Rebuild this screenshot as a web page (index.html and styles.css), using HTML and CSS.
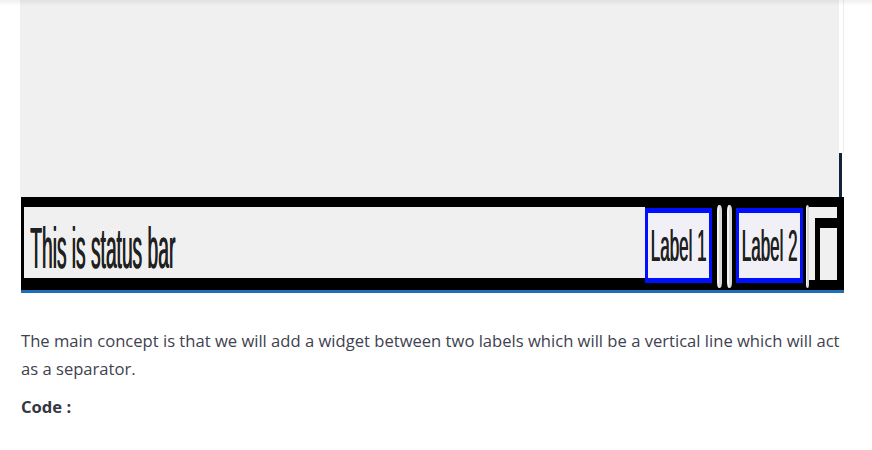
FILE: index.html
```html
<!DOCTYPE html>
<html>
<head>
<meta charset="utf-8">
<link rel="stylesheet" href="styles.css">
</head>
<body>
<div class="topshade"></div>
<main class="page">
  <div class="shot">
    <div class="canvas">
      <div class="window-area"></div>
      <div class="edge"><div class="edge-white"></div><div class="edge-dark"></div></div>
    </div>
    <div class="statusbar">
      <div class="message"><span class="msg-text">This is status bar</span></div>
      <div class="label"><span class="label-text">Label 1</span></div>
      <div class="gap5"></div>
      <div class="vline"></div>
      <div class="gap5"></div>
      <div class="vline"></div>
      <div class="gap4"></div>
      <div class="label"><span class="label-text">Label 2</span></div>
      <div class="gap3"></div>
      <div class="vline thin"></div>
      <div class="grip"><div class="grip-inner"></div></div>
    </div>
  </div>
  <p class="para">The main concept is that we will add a widget between two labels which will be a vertical line which will act as a separator.</p>
  <p class="para strong">Code :</p>
</main>
</body>
</html>
```

FILE: styles.css
```css
html, body {
  margin: 0;
  padding: 0;
  background: #ffffff;
}
.topshade {
  position: fixed;
  left: 0;
  top: 0;
  right: 0;
  height: 6px;
  background: linear-gradient(rgba(0,0,0,0.06), rgba(0,0,0,0));
  pointer-events: none;
}
.page {
  padding: 0 0 0 20px;
}
.shot {
  width: 824px;
  display: flex;
  flex-direction: column;
}
.canvas {
  display: flex;
  height: 197px;
}
.window-area {
  flex: 1;
  background: #f0f0f0;
}
.edge {
  width: 5px;
  display: flex;
  flex-direction: column;
}
.edge-white {
  height: 153px;
  background: #ffffff;
  border-right: 1px solid #ececec;
}
.edge-dark {
  flex: 1;
  width: 3px;
  background: #15233a;
}
.statusbar {
  margin-left: 1px;
  height: 96px;
  box-sizing: border-box;
  background: #000000;
  border-bottom: 3px solid #1f6fb8;
  display: flex;
  align-items: flex-start;
  padding: 10px 7px 0 3px;
}
.message {
  flex: 1;
  height: 71px;
  background: #f0f0f0;
  display: flex;
  align-items: center;
  padding-left: 6px;
  padding-top: 14px;
  box-sizing: border-box;
  overflow: hidden;
}
.msg-text {
  display: inline-block;
  font-family: "Liberation Sans", Arial, sans-serif;
  font-size: 19.2px;
  color: #202020;
  transform: scaleY(3.0);
  transform-origin: left center;
  text-shadow: 0.5px 0 0 #202020;
  white-space: nowrap;
}
.label {
  width: 67px;
  height: 75px;
  margin-top: 1px;
  box-sizing: border-box;
  border: solid #0010ff;
  border-width: 5px 3px 5px 3px;
  background: #f0f0f6;
  display: flex;
  align-items: center;
  justify-content: center;
  padding-top: 4px;
}
.label-text {
  display: inline-block;
  font-family: "Liberation Sans", Arial, sans-serif;
  font-size: 17px;
  color: #202020;
  transform: scaleY(2.6);
  text-shadow: 0.4px 0 0 #202020;
  white-space: nowrap;
}
.gap5 { width: 5px; height: 1px; }
.gap4 { width: 4px; height: 1px; }
.gap3 { width: 3px; height: 1px; }
.vline {
  width: 5px;
  height: 83px;
  margin-top: -2px;
  box-sizing: border-box;
  background: #d9d9d9;
  border-left: 2px solid #f4f4f4;
  border-radius: 2px / 6px;
}
.vline.thin {
  width: 3px;
  border-left-width: 1px;
}
.grip {
  width: 28px;
  height: 73px;
  background: #f0f0f0;
  box-sizing: border-box;
  padding: 11px 0 0 6px;
  display: flex;
}
.grip-inner {
  flex: 1;
  border-top: 10px solid #000;
  border-left: 5px solid #000;
  background: #f0f0f0;
}
.para {
  margin: 0;
  width: 822px;
  padding-left: 1px;
  font-family: "Open Sans", "Noto Sans", sans-serif;
  font-size: 16.6px;
  line-height: 28px;
  color: #40424f;
}
.para:first-of-type {
  margin-top: 34px;
}
.para.strong {
  margin-top: 10px;
  font-weight: 700;
  color: #35363f;
}
```
